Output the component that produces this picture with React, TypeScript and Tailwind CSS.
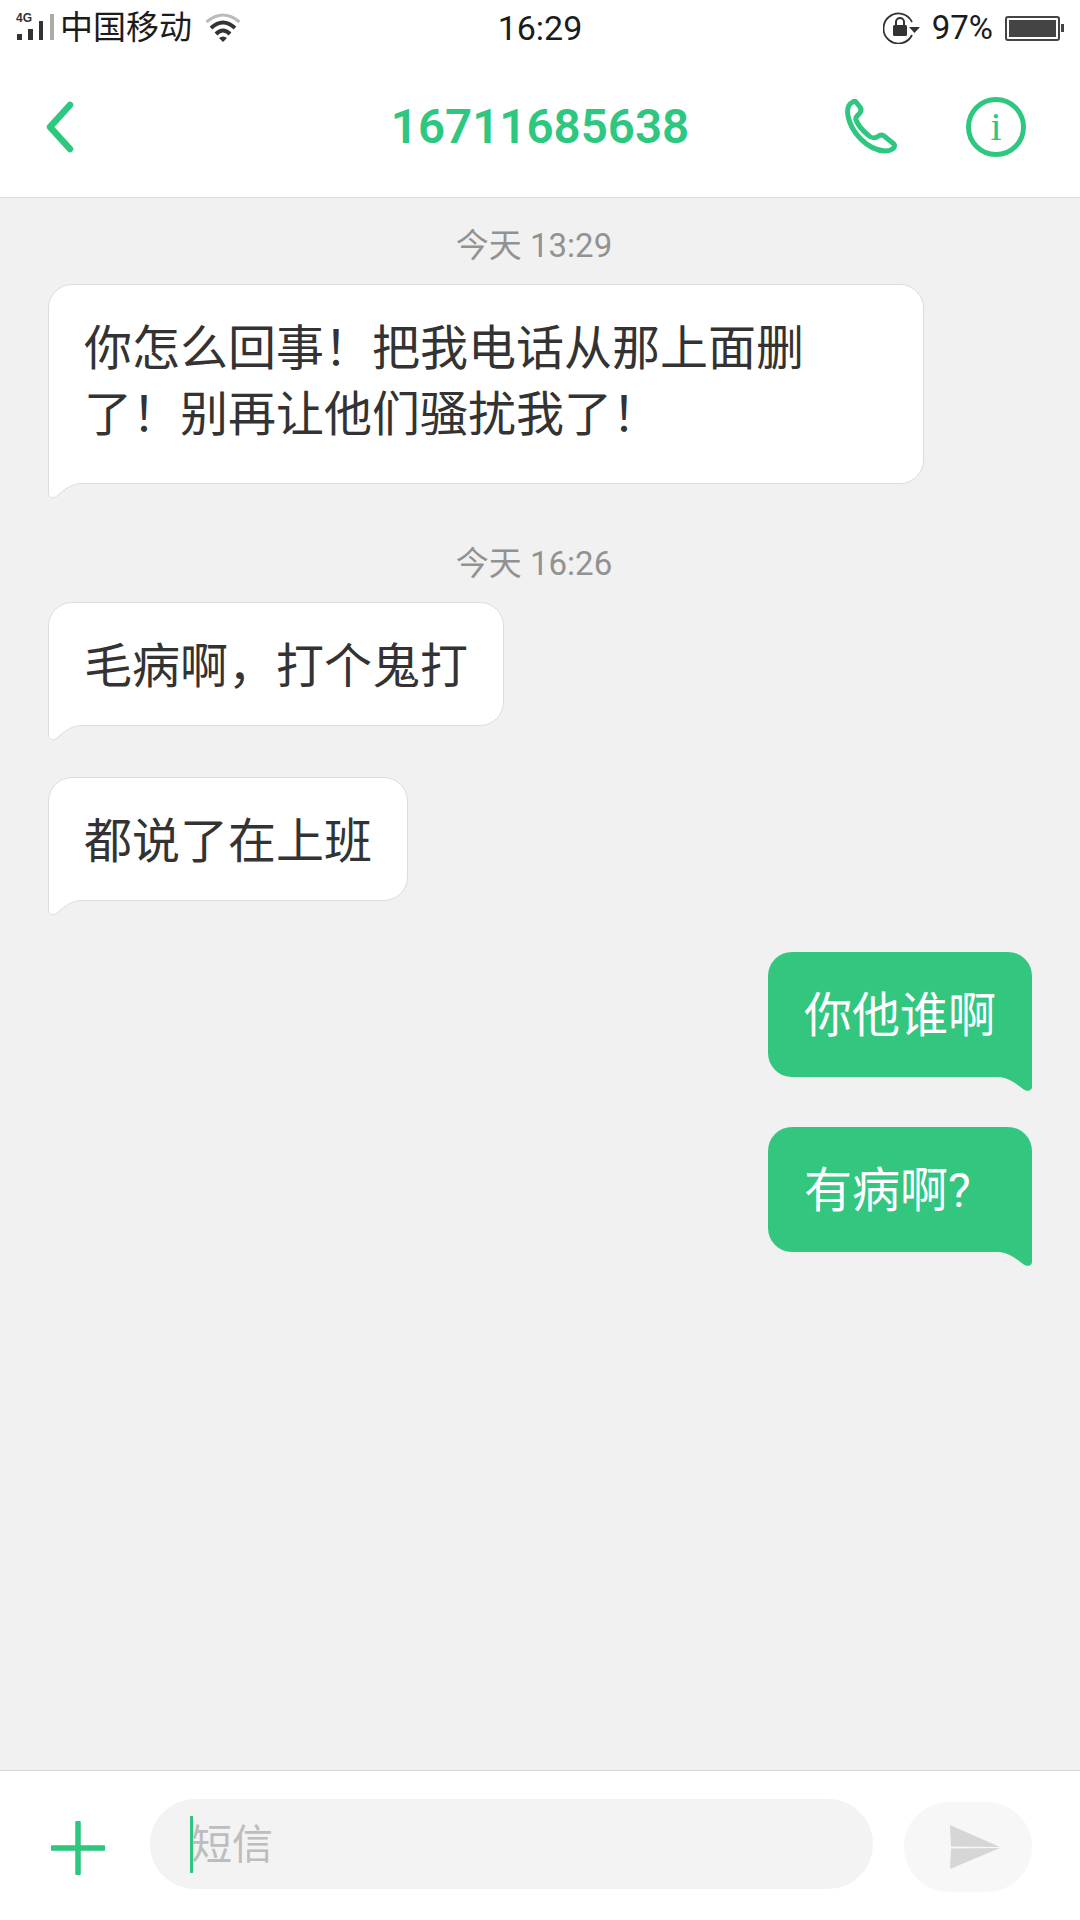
const CJK = "font-['Roboto','Noto_Sans_CJK_SC',sans-serif]";

function Stamp({ children, className }: { children: string; className: string }) {
  return (
    <div className={`h-[40px] pr-[12px] flex items-center justify-center text-[33px] leading-[40px] text-[#929292] ${className}`}>
      {children}
    </div>
  );
}

function In({ children, className = "" }: { children: React.ReactNode; className?: string }) {
  return (
    <div className={`relative bg-white border border-[#dcdcdc] rounded-[24px] rounded-bl-none pl-[35px] pt-[30px] text-[48px] leading-[66px] text-[#333333] ${className}`}>
      <div className="relative top-[1px]">{children}</div>
      <svg className="absolute left-[-1px] bottom-[-16px]" width="38" height="18" viewBox="0 0 38 18">
        <path d="M0 0H38V3H34C24 3 17 8 9 15C5 18 0 17 0 12Z" fill="#ffffff" />
        <path d="M38 2.5H34C24 2.5 17 8 9 15C5 18 .5 17 .5 12V0" fill="none" stroke="#dcdcdc" />
      </svg>
    </div>
  );
}

function Out({ children, className = "" }: { children: React.ReactNode; className?: string }) {
  return (
    <div className={`relative self-end w-[264px] h-[125px] bg-[#33c67f] rounded-[24px] rounded-br-none pl-[36px] pt-[31px] text-[48px] leading-[66px] text-white ${className}`}>
      {children}
      <svg className="absolute right-0 bottom-[-15px]" width="38" height="16" viewBox="0 0 38 16">
        <path d="M38 0V11C38 15 33 16 29 13C21 7 14 1 4 1H0V0Z" fill="#33c67f" />
      </svg>
    </div>
  );
}

export default function App() {
  return (
    <div className={`w-[1080px] h-[1920px] flex flex-col bg-[#f1f1f1] overflow-hidden ${CJK}`}>
      <div className="h-[56px] bg-white grid grid-cols-[1fr_auto_1fr] items-center text-[33px] text-[#1c1c1c]">
        <div className="flex items-center">
          <div className="relative w-[60px] h-[56px]">
            <span className="absolute left-[16px] top-[12px] text-[12px] leading-[12px] font-bold text-[#333] font-['Liberation_Sans',sans-serif]">4G</span>
            <svg className="absolute left-0 top-0" width="60" height="56" viewBox="0 0 60 56">
              <rect x="17" y="34" width="5" height="6" fill="#333" />
              <rect x="28" y="29" width="5" height="11" fill="#333" />
              <rect x="39" y="21" width="4" height="19" fill="#333" />
              <rect x="50" y="14" width="4" height="26" fill="#aaa" />
            </svg>
          </div>
          <span className="leading-[56px]">中国移动</span>
          <svg className="ml-[13px]" width="36" height="30" viewBox="0 0 36 30">
            <path d="M1.5 9Q18-5 34.5 9" fill="none" stroke="#bbb" strokeWidth="3" />
            <path d="M6 15Q18 4 30 15" fill="none" stroke="#333" strokeWidth="4" />
            <path d="M11 21Q18 14 25 21" fill="none" stroke="#333" strokeWidth="4" />
            <path d="M14 25Q18 22 22 25L18 29Z" fill="#333" />
          </svg>
        </div>
        <span className="leading-[56px] text-[34px]">16:29</span>
        <div className="flex items-center justify-end pr-[16px]">
          <svg width="37" height="32" viewBox="0 0 37 32">
            <path d="M29 10A15 15 0 1 0 29 23" fill="none" stroke="#333" strokeWidth="1.8" />
            <path d="M26 15H37L31.5 21Z" fill="#333" />
            <rect x="10" y="13" width="14" height="11" rx="1.5" fill="#333" />
            <path d="M13 13V10A4 4 0 0 1 21 10V13" fill="none" stroke="#333" strokeWidth="2" />
          </svg>
          <span className="ml-[12px] leading-[56px]">97%</span>
          <div className="ml-[12px] w-[55px] h-[25px] border-2 border-[#444] rounded-[3px] p-[2px]">
            <div className="w-[47px] h-full bg-[#444]" />
          </div>
          <div className="ml-[1px] w-[3px] h-[8px] bg-[#444]" />
        </div>
      </div>

      <div className="h-[142px] bg-white border-b border-[#dadada] grid grid-cols-[1fr_auto_1fr] items-center">
        <div className="pl-[44px]">
          <svg width="32" height="54" viewBox="0 0 32 54">
            <path d="M26 5L6 27L26 49" fill="none" stroke="#2ec77f" strokeWidth="6.5" strokeLinecap="round" strokeLinejoin="round" />
          </svg>
        </div>
        <span className="text-[47.5px] leading-[60px] font-semibold text-[#2ec77f] font-['Roboto',sans-serif]">16711685638</span>
        <div className="flex items-center justify-end pr-[54px] gap-[68px]">
          <svg width="54" height="56" viewBox="833 99 54 56">
            <path d="M842 102C837 104 836 110 837 116C840 132 856 150 874 151C880 151 885 148 883 144L873 136C871 134 869 135 866 137C862 139 860 138 857 135C851 130 847 125 845 120C844 117 846 116 848 114C850 112 851 110 849 107L845 102C844 101 843 101 842 102Z" fill="none" stroke="#2ec77f" strokeWidth="5" strokeLinejoin="round" />
          </svg>
          <div className="w-[60px] h-[60px] rounded-full border-[5px] border-[#2ec77f] flex items-center justify-center text-[40px] leading-none text-[#2ec77f] font-['Liberation_Serif',serif]">
            i
          </div>
        </div>
      </div>

      <div className="flex-1 px-[48px] flex flex-col">
        <Stamp className="mt-[28px] mb-[18px]">今天 13:29</Stamp>
        <In className="w-[876px] h-[200px] pr-[119px]">你怎么回事！把我电话从那上面删了！别再让他们骚扰我了！</In>
        <Stamp className="mt-[60px] mb-[18px]">今天 16:26</Stamp>
        <In className="w-[456px] h-[124px]">毛病啊，打个鬼打</In>
        <In className="w-[360px] h-[124px] mt-[51px]">都说了在上班</In>
        <Out className="mt-[51px]">你他谁啊</Out>
        <Out className="mt-[50px]">有病啊?</Out>
      </div>

      <div className="h-[150px] bg-white border-t border-[#d6d6d6] flex items-start">
        <svg className="ml-[51px] mt-[50px]" width="54" height="54" viewBox="0 0 54 54">
          <path d="M27 1.5V52.5M1.5 27H52.5" stroke="#2ec77f" strokeWidth="5.5" strokeLinecap="round" />
        </svg>
        <div className="ml-[45px] mt-[28px] w-[723px] h-[90px] rounded-full bg-[#f3f3f3] flex items-center pl-[40px] text-[41px] leading-[50px] text-[#bdbdbd]">
          <div className="w-[3px] h-[57px] bg-[#2ec77f]" />
          <span className="-ml-[2px] mt-[2px]">短信</span>
        </div>
        <div className="ml-[31px] mt-[31px] w-[128px] h-[90px] rounded-full bg-[#f7f7f7] flex items-center justify-center pl-[14px]">
          <svg width="50" height="44" viewBox="0 0 50 44">
            <path d="M0 0L50 22L1 21.5Z" fill="#d6d6d6" />
            <path d="M0 44L50 23L1 23.5Z" fill="#d6d6d6" />
          </svg>
        </div>
      </div>
    </div>
  );
}
